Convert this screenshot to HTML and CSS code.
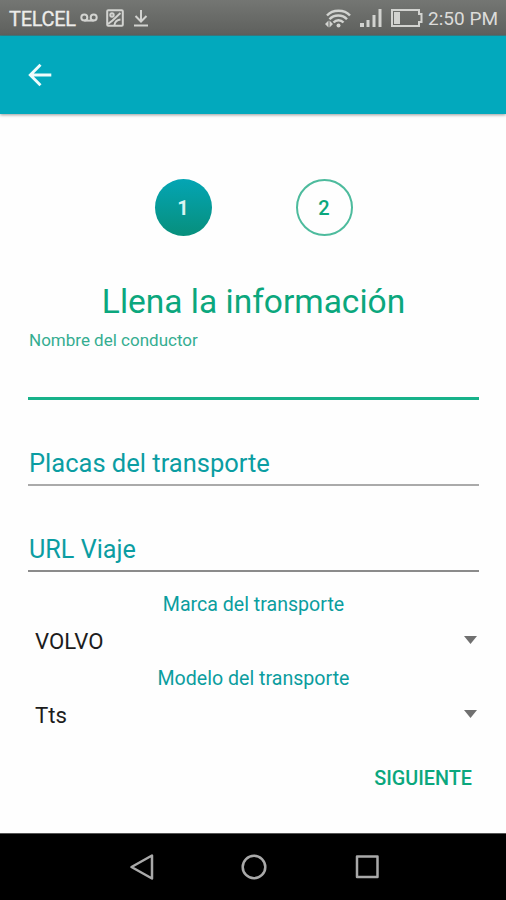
FILE: index.html
```html
<!DOCTYPE html>
<html lang="es">
<head>
<meta charset="utf-8">
<title>Llena la información</title>
<link rel="stylesheet" href="styles.css">
</head>
<body>
<div class="status">
  <span class="carrier">TELCEL</span>
  <svg class="voicemail" width="18" height="12" viewBox="0 0 18 12"><circle cx="4.3" cy="5.5" r="3"/><circle cx="13.7" cy="5.5" r="3"/><path d="M4.3 8.6h9.4"/></svg>
  <svg class="image" width="18" height="18" viewBox="0 0 18 18"><rect x="1.2" y="1.2" width="15.6" height="15.6" rx="1"/><circle cx="6" cy="6" r="1.7"/><path d="M2 15l4.500-3.500 8-7.500M8.500 16c.3-3 2-5 6-5.500"/></svg>
  <svg class="download" width="16" height="18" viewBox="0 0 16 18"><path d="M8 1v11M2.500 7L8 12.500 13.500 7M1 16.400h14"/></svg>
  <span class="spacer"></span>
  <svg class="wifi" width="27" height="19" viewBox="0 0 27 19"><path d="M3 6.500C8.500.2 20.500.2 26 6.500M5.500 10.300c4.500-5 13-5 17.500 0M9.500 13.500c2.800-3 7.200-3 10 0"/><circle class="solid" cx="14.500" cy="16.500" r="2"/><path class="solid" d="M1 15l3.500-3.500v7zM9 15l-3.500-3.500v7z"/></svg>
  <svg class="signal" width="22" height="18" viewBox="0 0 22 18"><path class="solid" d="M0 14h4v4H0zM6.500 11h3v7h-3zM12.500 6h3v12h-3zM18.500 0h3v18h-3z"/></svg>
  <svg class="battery" width="32" height="18" viewBox="0 0 32 18"><path d="M1 1h27v4h2.500v8H28v4H1z"/><path class="solid" d="M3 3h6v12H3z"/></svg>
  <span class="clock">2:50 PM</span>
</div>
<header class="appbar">
  <svg width="24" height="24" viewBox="0 0 24 24"><path d="M23.300 12H2M12.500 1.800L2.300 12l10.200 10.200"/></svg>
</header>
<main class="form">
  <div class="steps">
    <span class="step active">1</span>
    <span class="step">2</span>
  </div>
  <h1 class="title">Llena la información</h1>
  <div class="field focused"><label>Nombre del conductor</label></div>
  <div class="field plates"><label>Placas del transporte</label></div>
  <div class="field url"><label>URL Viaje</label></div>
  <div class="caption brand">Marca del transporte</div>
  <div class="select"><span>VOLVO</span><i class="caret"></i></div>
  <div class="caption model">Modelo del transporte</div>
  <div class="select"><span>Tts</span><i class="caret"></i></div>
  <div class="actions"><span class="next">SIGUIENTE</span></div>
</main>
<nav class="navbar">
  <svg width="26" height="28" viewBox="0 0 26 28"><path d="M24 2.500v23L3.500 14z"/></svg>
  <svg width="26" height="28" viewBox="0 0 26 28"><circle cx="13" cy="14" r="11.300"/></svg>
  <svg width="26" height="28" viewBox="0 0 26 28"><rect x="3" y="3.500" width="20.500" height="20.500"/></svg>
</nav>
</body>
</html>
```
FILE: styles.css
```css
* { box-sizing: border-box; }
body {
  margin: 0;
  width: 506px;
  height: 900px;
  display: flex;
  flex-direction: column;
  overflow: hidden;
  background: #fefefe;
  font-family: Roboto, "Liberation Sans", sans-serif;
}
svg { display: block; flex: none; fill: none; stroke-width: 2; }
.status {
  height: 36px;
  padding: 1px 8px 0 9px;
  display: flex;
  align-items: center;
  background: linear-gradient(#747673, #5e605d);
  color: #dcdcda;
  border-bottom: 1px solid #3d7f85;
}
.status svg { stroke: #d2d3d0; }
.status .solid { fill: #d2d3d0; stroke: none; }
.carrier { padding-top: 2px; font-size: 20px; line-height: 24px; letter-spacing: -0.3px; width: 67px; color: #ececea; -webkit-text-stroke: 0.3px #ececea; }
.voicemail { margin-left: 4px; }
.image { margin-left: 8px; }
.download { margin-left: 9px; }
.spacer { flex: 1; }
.status .wifi { margin-right: 9px; stroke-width: 2.4; }
.signal { margin-right: 9px; }
.battery { margin-right: 5px; }
.clock { padding-top: 2px; font-size: 19px; line-height: 24px; white-space: nowrap; }
.appbar {
  height: 78px;
  padding-left: 28px;
  display: flex;
  align-items: center;
  background: #02a9bd;
  box-shadow: 0 1px 3px rgba(0, 0, 0, 0.4);
}
.appbar svg { stroke: #effcfc; stroke-width: 2.9; }
.form { flex: 1; padding: 65px 27px 0 28px; color: #0ba77d; }
.steps { display: flex; justify-content: center; gap: 84px; }
.step {
  width: 57px;
  height: 57px;
  display: flex;
  align-items: center;
  justify-content: center;
  border: 2px solid #4dbb9d;
  border-radius: 50%;
  font-size: 20px;
  font-weight: 500;
}
.step.active { border: 0; color: #d8f5f2; background: linear-gradient(#04a5b4, #078f7c); font-weight: 700; }
.title {
  margin: 46px 0 0;
  font-size: 33.5px;
  line-height: 40px;
  font-weight: 400;
  text-align: center;
}
.field { display: flex; align-items: flex-start; color: #0b9da2; font-size: 25.5px; line-height: 32px; border-bottom: 2px solid #aaa; padding-left: 1px; }
.focused { height: 70px; margin-top: 8px; padding-left: 1px; color: #35ad91; font-size: 17px; line-height: 20px; border-bottom: 3px solid #18b28a; }
.plates { height: 39px; margin-top: 47px; }
.url { height: 38px; margin-top: 48px; border-color: #8b8b8b; font-size: 25.2px; }
.caption { height: 24px; color: #0b9d9e; font-size: 19.6px; line-height: 24px; text-align: center; }
.brand { margin-top: 21px; }
.model { margin-top: 12px; }
.select { height: 28px; margin-top: 10px; padding: 0 2px 0 7px; display: flex; align-items: center; justify-content: space-between; color: #1c1c1c; font-size: 22.2px; line-height: 28px; }
.caret { width: 13px; height: 8px; margin-bottom: 2px; background: #707070; clip-path: polygon(0 0, 100% 0, 50% 100%); }
.actions { display: flex; justify-content: flex-end; margin-top: 38px; padding-right: 7px; }
.next { font-size: 19.8px; line-height: 24px; font-weight: 500; }
.navbar {
  height: 67px;
  display: flex;
  justify-content: center;
  gap: 87px;
  padding: 19px 0 0 1px;
  background: #000;
  border-top: 1px solid #555;
}
.navbar svg { stroke: #a9a9a9; stroke-width: 2.5; stroke-linejoin: round; }
```
